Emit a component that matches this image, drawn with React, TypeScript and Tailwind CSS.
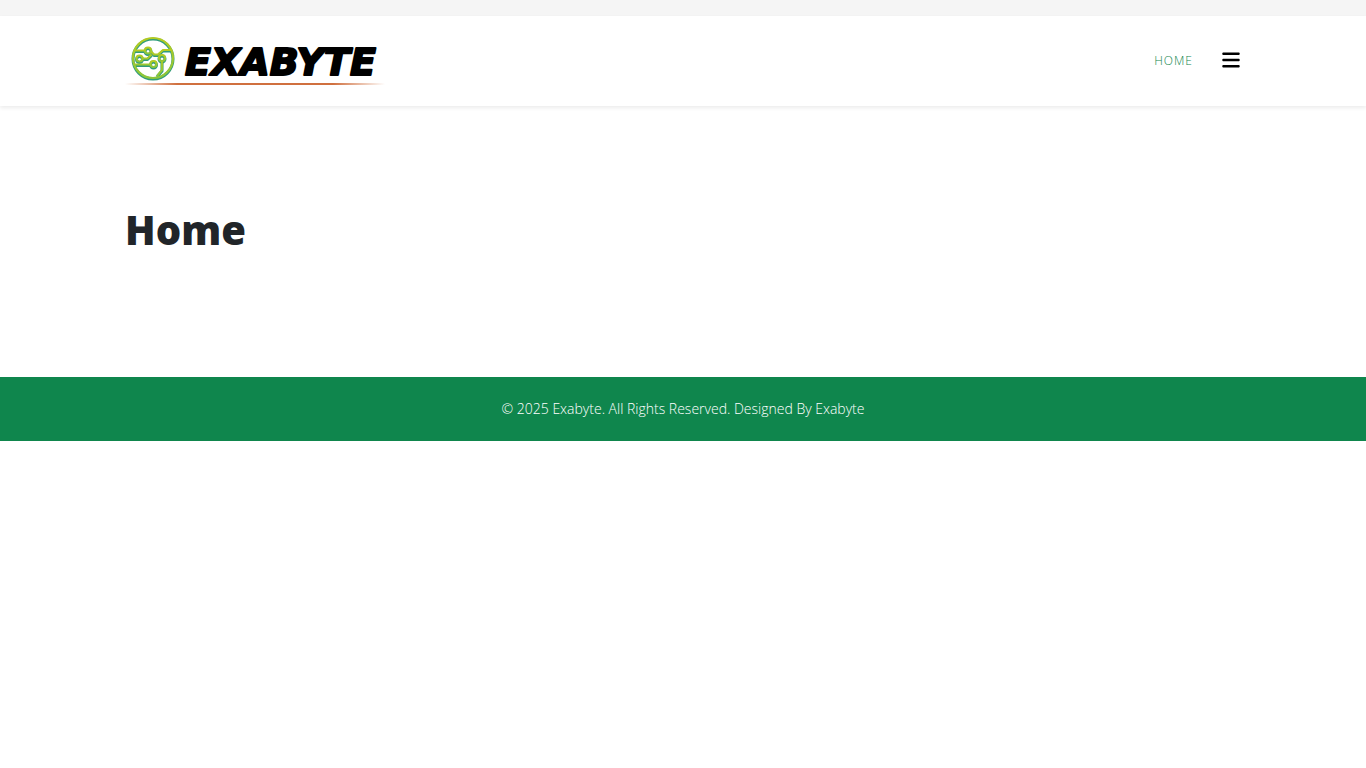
import { FaBars } from "react-icons/fa6";

function Logo() {
  return (
    <svg viewBox="0 0 260 60" className="h-[60px] w-[260px]" role="img" aria-label="Exabyte">
      <defs>
        <linearGradient id="leaf" x1="0" y1="0" x2="0" y2="1">
          <stop offset="0" stopColor="#b4cb22" />
          <stop offset="1" stopColor="#8cc63a" />
        </linearGradient>
        <linearGradient id="rule" x1="0" y1="0" x2="1" y2="0">
          <stop offset="0" stopColor="#d0703f" stopOpacity="0" />
          <stop offset="0.2" stopColor="#d0703f" />
          <stop offset="0.8" stopColor="#d0703f" />
          <stop offset="1" stopColor="#d0703f" stopOpacity="0" />
        </linearGradient>
        <g id="circuit" fill="none" strokeLinejoin="round">
          <circle cx="28" cy="27" r="20" />
          <circle cx="23" cy="19.5" r="3" />
          <circle cx="14.5" cy="27.5" r="3" />
          <circle cx="28.5" cy="33" r="3" />
          <circle cx="37" cy="27" r="3" />
          <path d="M10 19.5h10M26 20.5l3 3h4l5-4.5h9M17.500 27.500h5l4-4M10 33.500h15.500M37 30v9l-5 6" />
        </g>
      </defs>
      <use href="#circuit" y="1" stroke="#2f9c7c" strokeWidth="3" />
      <use href="#circuit" stroke="url(#leaf)" strokeWidth="2.2" />
      <text
        x="60"
        y="44"
        className="fill-black stroke-black font-['DejaVu_Sans',sans-serif] text-[38px] font-bold italic"
        strokeWidth="2"
        strokeLinejoin="round"
      >
        EXABYTE
      </text>
      <rect y="52" width="260" height="2" fill="url(#rule)" />
    </svg>
  );
}

function Header() {
  return (
    <header className="bg-white shadow-[0_2px_4px_0_rgba(0,0,0,0.08)]">
      <div className="mx-auto flex h-[90px] w-full max-w-[1140px] items-center justify-between px-3">
        <a href="/">
          <Logo />
        </a>

        <nav className="flex items-center gap-7">
          <a href="/" className="text-xs font-light tracking-[1px] text-[#0f864d] uppercase">
            Home
          </a>
          <button type="button" aria-label="Menu" className="pb-0.5 text-xl text-black">
            <FaBars />
          </button>
        </nav>
      </div>
    </header>
  );
}

export default function App() {
  return (
    <div className="bg-white font-['Open_Sans',sans-serif] text-[#212529]">
      <div className="h-4 bg-[#f5f5f5]" />
      <Header />

      <main className="mx-auto w-full max-w-[1140px] px-3 pt-[100px] pb-[123px]">
        <h1 className="text-[40px] leading-[48px] font-extrabold">Home</h1>
      </main>

      <footer className="bg-[#0f864d] px-3 py-5 text-center text-sm leading-6 font-light text-white">
        © 2025 Exabyte. All Rights Reserved. Designed By Exabyte
      </footer>
    </div>
  );
}
